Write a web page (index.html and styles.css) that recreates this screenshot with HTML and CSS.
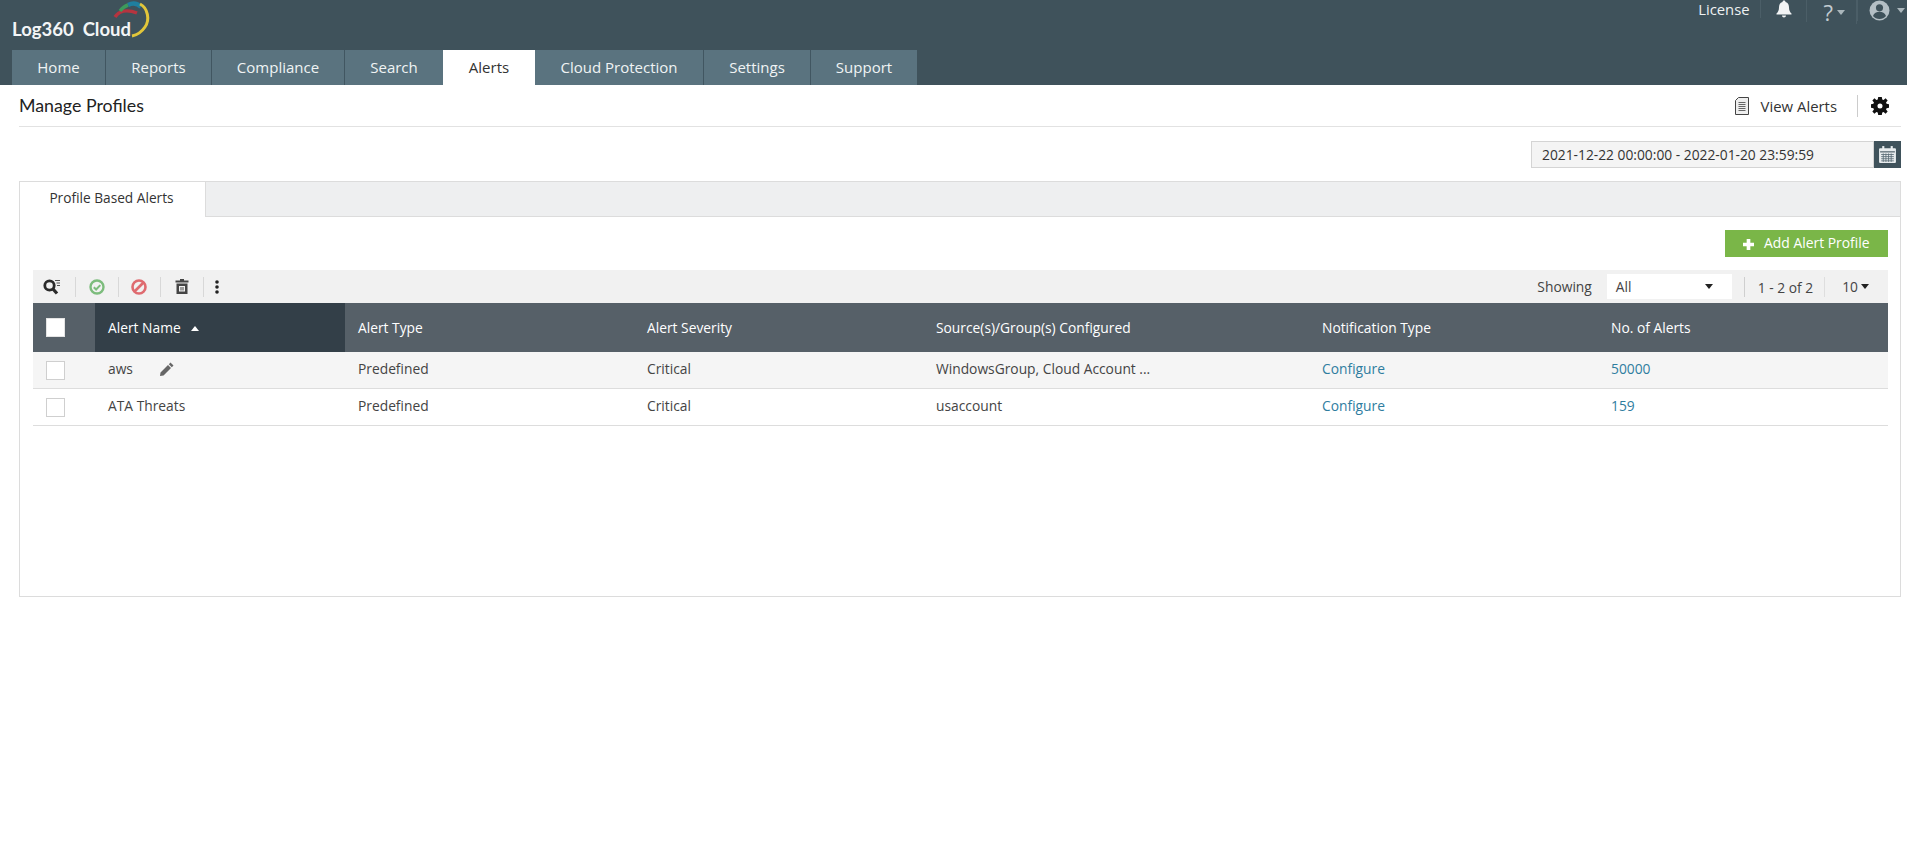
FILE: index.html
```html
<!DOCTYPE html>
<html lang="en">
<head>
<meta charset="utf-8">
<title>Manage Profiles</title>
<link rel="stylesheet" href="styles.css">
</head>
<body>
<header class="top">
  <div class="top-row">
    <div class="logo">
      <span class="logo-text">Log360&nbsp; Cloud</span>
      <svg class="logo-arcs" viewBox="0 0 40 40" width="40" height="40" fill="none">
        <path d="M3 17C7 11 15 9 25 13" stroke="#b5343f" stroke-width="3.500"/>
        <path d="M16 5C20 3 25 3 29 7" stroke="#1f7f9f" stroke-width="4.500"/>
        <path d="M8 11C10 8.500 13 6 16 5" stroke="#3d9a5b" stroke-width="3.500"/>
        <path d="M28 4C36 8 38 20 33 27C29 33 25 35 20 36" stroke="#e2c63a" stroke-width="3"/>
      </svg>
    </div>
    <div class="util">
      <span class="util-item license">License</span>
      <span class="util-item bell">
        <svg viewBox="0 0 18 18" width="18" height="18"><path fill="#f2f4f5" d="M9 0.500c1 0 1.500.7 1.500 1.400 2.600.7 3.500 3 3.500 5.600 0 3 1 4.600 2.500 6v1H1.500v-1C3 12.100 4 10.500 4 7.500c0-2.600.9-4.900 3.500-5.600C7.500 1.200 8 .5 9 .5zM7 15.500h4c0 1.200-.9 2-2 2s-2-.8-2-2z"/></svg>
      </span>
      <span class="util-item help">?<i class="caret caret-dim"></i></span>
      <span class="util-item user">
        <svg viewBox="0 0 20 20" width="21" height="21"><circle cx="10" cy="10" r="9.500" fill="#b4bfc5"/><circle cx="10" cy="7.500" r="3.400" fill="#3f525b"/><path fill="#3f525b" d="M3.800 15.200c1-2.700 3.400-3.900 6.200-3.900s5.200 1.200 6.200 3.900C14.700 17 12.500 18 10 18s-4.700-1-6.200-2.800z"/></svg>
        <i class="caret caret-dim caret-user"></i>
      </span>
    </div>
  </div>
  <nav class="tabs">
    <a class="tab w-home">Home</a>
    <a class="tab w-reports">Reports</a>
    <a class="tab w-compliance">Compliance</a>
    <a class="tab w-search">Search</a>
    <a class="tab tab-active w-alerts">Alerts</a>
    <a class="tab w-cloud">Cloud Protection</a>
    <a class="tab w-settings">Settings</a>
    <a class="tab w-support">Support</a>
  </nav>
</header>

<main class="page">
  <div class="title-row">
    <h1 class="title">Manage Profiles</h1>
    <div class="title-actions">
      <svg class="doc-icon" viewBox="0 0 14 18" width="14" height="18"><path d="M3.500 .5h10v17H.5V3.500z" fill="#eeeeee" stroke="#444"/><path d="M3.500 5.500h7M3.500 7.500h7M3.500 9.500h7M3.500 11.500h7M3.500 13.500h7" stroke="#666" stroke-width="1"/></svg>
      <span class="view-alerts">View Alerts</span>
      <span class="v-sep"></span>
      <svg class="gear" viewBox="0 0 20 20" width="18" height="18"><path fill="#111" fill-rule="evenodd" d="M8 0h4l.5 2.700 1.500.6L16.200 1.500 18.500 3.800l-1.800 2.200.6 1.500 2.700.5v4l-2.700.5-.6 1.500 1.800 2.200-2.300 2.300-2.200-1.800-1.500.6-.5 2.700H8l-.5-2.700-1.500-.6-2.200 1.800L1.500 16.200l1.800-2.200-.6-1.500L0 12V8l2.700-.5.6-1.500L1.500 3.800 3.800 1.500l2.200 1.800 1.500-.6zM10 7.200a2.800 2.800 0 1 0 0 5.600 2.800 2.800 0 0 0 0-5.600z"/></svg>
    </div>
  </div>

  <div class="date-row">
    <div class="date-input">2021-12-22 00:00:00 - 2022-01-20 23:59:59</div>
    <button class="date-btn" type="button" aria-label="Calendar">
      <svg viewBox="0 0 18 18" width="19" height="19"><rect x="1" y="3" width="16" height="14" rx="1" fill="#e8ecee"/><rect x="4" y="1" width="2" height="4" fill="#e8ecee"/><rect x="12" y="1" width="2" height="4" fill="#e8ecee"/><rect x="2" y="6" width="14" height="1" fill="#3f525b"/><path d="M3 9h12M3 11h12M3 13h12M3 15h12M5 8v8M7.500 8v8M10 8v8M12.500 8v8" stroke="#5a6c75" stroke-width=".8"/></svg>
    </button>
  </div>

  <section class="panel">
    <div class="panel-tabs">
      <div class="panel-tab">Profile Based Alerts</div>
    </div>
    <div class="panel-body">
      <div class="actions">
        <button class="add-btn" type="button">
          <svg viewBox="0 0 12 12" width="11" height="11"><path fill="#fff" d="M4 0h4v4h4v4H8v4H4V8H0V4h4z"/></svg>
          Add Alert Profile
        </button>
      </div>
      <div class="toolbar">
        <div class="tool-group">
          <span class="tool tool-first">
            <svg viewBox="0 0 18 16" width="18" height="16" fill="none"><circle cx="6.500" cy="6.500" r="4.700" stroke="#2b2b2b" stroke-width="2.800"/><path d="M10 10l4 4.500" stroke="#2b2b2b" stroke-width="3.200"/><path d="M12 1.500h5M13.500 4h3.500M14 6.500h3" stroke="#555" stroke-width="1.100"/></svg>
          </span>
          <span class="tool">
            <svg viewBox="0 0 16 16" width="16" height="16" fill="none"><circle cx="8" cy="8" r="6.500" stroke="#7cbc7c" stroke-width="2.400"/><path d="M4.800 8.200l2.300 2.300 4.200-4.400" stroke="#7cbc7c" stroke-width="2"/></svg>
          </span>
          <span class="tool">
            <svg viewBox="0 0 16 16" width="16" height="16" fill="none"><circle cx="8" cy="8" r="6.500" stroke="#df6b70" stroke-width="2.600"/><path d="M3.500 12.500l9-9" stroke="#df6b70" stroke-width="2.600"/></svg>
          </span>
          <span class="tool">
            <svg viewBox="0 0 14 15" width="14" height="15"><path fill="#444" d="M5 0h4v1.500h4.500v2H.5v-2H5zM1.500 4.500h11V15h-11zM4 7v5.500h6V7zM5.500 8h1v3.500h-1zM7.500 8h1v3.500h-1z" fill-rule="evenodd"/></svg>
          </span>
          <span class="tool tool-last">
            <svg viewBox="0 0 4 14" width="4" height="14"><circle cx="2" cy="2" r="1.800" fill="#222"/><circle cx="2" cy="7" r="1.800" fill="#222"/><circle cx="2" cy="12" r="1.800" fill="#222"/></svg>
          </span>
        </div>
        <div class="pager">
          <span class="showing">Showing</span>
          <span class="select">All<i class="caret caret-dark"></i></span>
          <span class="p-sep"></span>
          <span class="range">1 - 2 of 2</span>
          <span class="p-sep p-sep-light"></span>
          <span class="per-page">10<i class="caret caret-dark"></i></span>
        </div>
      </div>
      <table class="grid">
        <colgroup>
          <col class="c-check"><col class="c-name"><col class="c-type"><col class="c-sev"><col class="c-src"><col class="c-notif"><col class="c-num">
        </colgroup>
        <thead>
          <tr>
            <th class="check-cell head-check"><span class="check check-head"></span></th>
            <th class="sorted">Alert Name<i class="caret caret-up"></i></th>
            <th>Alert Type</th>
            <th>Alert Severity</th>
            <th>Source(s)/Group(s) Configured</th>
            <th>Notification Type</th>
            <th>No. of Alerts</th>
          </tr>
        </thead>
        <tbody>
          <tr class="row-hover">
            <td class="check-cell"><span class="check"></span></td>
            <td><span class="name-aws">aws</span><svg class="pencil" viewBox="0 0 14 14" width="14" height="14"><path fill="#666" d="M10.500 .5l3 3-1.700 1.700-3-3zM8 3l3 3-7.500 7.500L0 14l.5-3.500z"/></svg></td>
            <td>Predefined</td>
            <td>Critical</td>
            <td>WindowsGroup, Cloud Account ...</td>
            <td><a class="link">Configure</a></td>
            <td><a class="link">50000</a></td>
          </tr>
          <tr>
            <td class="check-cell"><span class="check"></span></td>
            <td>ATA Threats</td>
            <td>Predefined</td>
            <td>Critical</td>
            <td>usaccount</td>
            <td><a class="link">Configure</a></td>
            <td><a class="link">159</a></td>
          </tr>
        </tbody>
      </table>
    </div>
  </section>
</main>
</body>
</html>
```
FILE: styles.css
```css
* { box-sizing: border-box; }
html, body { margin: 0; padding: 0; background: #fff; }
body { font-family: "Open Sans", "Liberation Sans", sans-serif; font-size: 14px; color: #333; }

.top { height: 85px; background: #3f525b; display: flex; flex-direction: column; }
.top-row { height: 50px; display: flex; justify-content: space-between; padding-left: 12px; }
.logo { position: relative; width: 150px; }
.logo-text { position: absolute; left: 0; top: 18px; font-family: Lato, sans-serif; font-weight: 700; font-size: 18.500px; line-height: 22px; color: #f3f5f6; white-space: pre; }
.logo-arcs { position: absolute; left: 100px; top: 0; }

.util { display: flex; align-items: flex-start; color: #eef1f2; }
.util-item { display: flex; align-items: center; border-right: 1px solid #4b5e67; }
.util-item svg { display: block; }
.license { font-size: 14.800px; line-height: 18px; height: 18px; padding-right: 10px; }
.bell { height: 22px; padding: 0 13px 4px 14px; }
.help { height: 24px; padding: 0 11px 0 17px; font-size: 22px; line-height: 24px; color: #c3ccd1; }
.user { height: 21px; padding: 0 2px 0 11px; border-right: 0; border-left: 1px solid #4b5e67; }

.caret { display: inline-block; width: 0; height: 0; border-left: 4.500px solid transparent; border-right: 4.500px solid transparent; border-top: 5px solid #333; }
.caret-dim { border-top-color: #aab6bb; margin-left: 4px; }
.caret-user { margin-left: 7px; }
.caret-dark { border-top-color: #222; }
.caret-up { border-top: 0; border-bottom: 5px solid #fff; margin-left: 10px; vertical-align: 2px; }

.tabs { display: flex; height: 35px; padding-left: 12px; }
.tab { display: flex; align-items: center; justify-content: center; height: 35px; padding-bottom: 2px; background: #5a737f; color: #f0f3f4; font-size: 15px; border-right: 1px solid #415661; }
.w-home { width: 94px; }
.w-reports { width: 106px; }
.w-compliance { width: 133px; }
.w-search { width: 98px; border-right: 0; }
.w-alerts { width: 92px; }
.w-cloud { width: 169px; }
.w-settings { width: 107px; }
.w-support { width: 106px; border-right: 0; }
.tab-active { background: #fff; color: #333; border-right: 0; }

.page { padding: 0 6px 0 19px; }
.title-row { height: 42px; border-bottom: 1px solid #e2e2e2; display: flex; justify-content: space-between; align-items: center; padding-bottom: 2px; }
.title { margin: 0; font-family: Lato, sans-serif; font-weight: 400; font-size: 17.800px; color: #222; }
.title-actions { display: flex; align-items: center; padding: 2px 12px 0 0; }
.doc-icon { margin-right: 12px; display: block; }
.view-alerts { font-size: 14.900px; color: #333; }
.v-sep { width: 1px; height: 22px; background: #ccc; margin: 0 13px 0 20px; }
.gear { display: block; }

.date-row { display: flex; justify-content: flex-end; margin-top: 14px; height: 27px; }
.date-input { width: 343px; height: 27px; background: #f4f4f4; border: 1px solid #d4d4d4; padding-left: 10px; line-height: 25px; font-size: 13.800px; color: #333; }
.date-btn { width: 27px; height: 27px; border: 0; padding: 0; background: #3f525b; display: flex; align-items: center; justify-content: center; }

.panel { margin-top: 13px; height: 416px; border: 1px solid #dcdcdc; }
.panel-tabs { height: 35px; background: #eeeff0; border-bottom: 1px solid #dcdcdc; }
.panel-tab { width: 186px; height: 35px; background: #fff; border-right: 1px solid #dcdcdc; text-align: center; line-height: 32px; font-size: 13.700px; color: #333; padding-right: 2px; }
.panel-body { padding: 13px 12px 0 13px; }
.actions { display: flex; justify-content: flex-end; height: 27px; }
.add-btn { width: 163px; height: 27px; border: 0; background: #7ab648; color: #fff; font-family: inherit; font-size: 13.900px; line-height: 25px; display: flex; align-items: flex-start; padding: 0 0 0 18px; gap: 10px; }
.add-btn svg { display: block; margin-top: 9px; }

.toolbar { margin-top: 13px; height: 33px; background: #f1f1f1; display: flex; justify-content: space-between; align-items: center; }
.tool-group { display: flex; align-items: center; }
.tool { width: 42.500px; height: 20px; display: flex; align-items: center; justify-content: center; border-right: 1px solid #d8d8d8; }
.tool-first { width: 43px; padding-right: 5px; }
.tool-last { border-right: 0; width: 15px; justify-content: flex-end; }
.tool svg { display: block; }
.pager { display: flex; align-items: center; height: 33px; font-size: 13.800px; color: #444; }
.showing { margin-right: 15px; }
.select { width: 125px; height: 25px; background: #fff; display: flex; align-items: center; justify-content: space-between; padding: 0 19px 0 9px; margin-right: 12px; }
.p-sep { width: 1px; height: 20px; background: #cfcfcf; }
.p-sep-light { background: #dedede; }
.range { padding: 1px 11px 0 13px; }
.per-page { padding-left: 17px; padding-right: 19px; display: flex; align-items: center; gap: 3px; }

.grid { width: 100%; table-layout: fixed; border-collapse: separate; border-spacing: 0; }
.c-check { width: 62px; }
.c-name { width: 250px; }
.c-type { width: 289px; }
.c-sev { width: 289px; }
.c-src { width: 386px; }
.c-notif { width: 289px; }
.grid th { height: 49px; background: #566068; color: #fff; font-weight: 400; font-size: 13.800px; text-align: left; padding: 0 0 1px 13px; }
.grid th.sorted { background: #333f48; }
.grid .head-check { padding-top: 2px; padding-bottom: 0; }
.grid td { height: 37px; padding: 0 0 3px 13px; font-size: 13.800px; color: #444; border-bottom: 1px solid #dddddd; white-space: nowrap; }
.row-hover td { background: #f5f5f5; }
.grid .check-cell { padding: 0 0 0 13px; }
.check { display: block; width: 19px; height: 19px; background: #fff; border: 1px solid #cfcfcf; }
.check-head { border-color: #e4e4e4; }
.name-aws { margin-right: 27px; }
.pencil { vertical-align: -2px; }
.link { color: #2f7d9f; }
```
